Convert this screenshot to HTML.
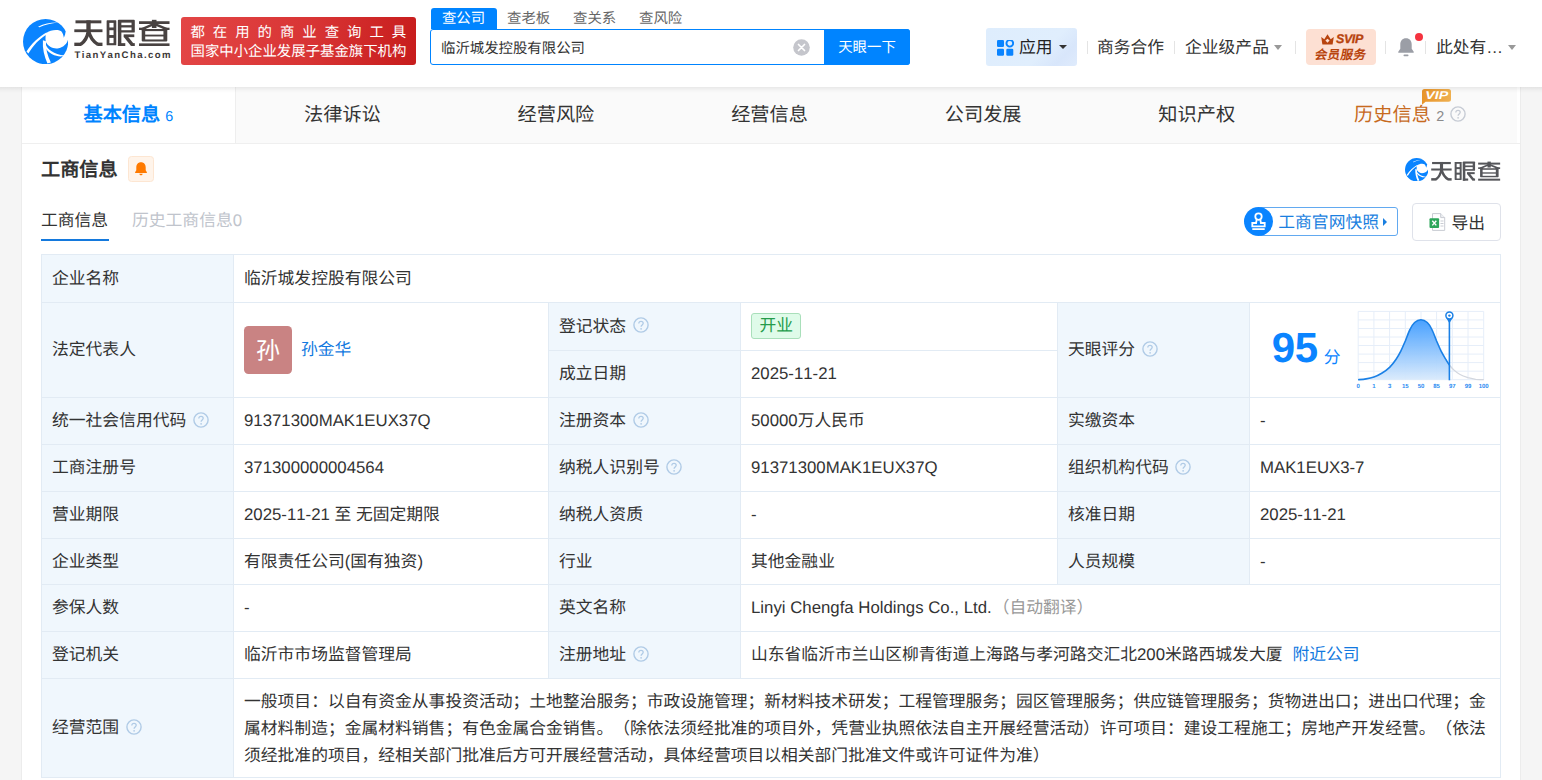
<!DOCTYPE html>
<html lang="zh-CN">
<head>
<meta charset="utf-8">
<title>临沂城发控股有限公司 - 天眼查</title>
<style>
*{box-sizing:border-box;margin:0;padding:0}
html,body{width:1542px;height:780px;overflow:hidden;background:#f5f5f5}
body{font-family:"Liberation Sans",sans-serif;color:#333;font-size:16.8px;position:relative;text-rendering:geometricPrecision;line-height:20px;text-spacing-trim:space-all;font-kerning:none}
.abs{position:absolute;white-space:nowrap}
/* header */
#hdr{position:absolute;left:0;top:0;width:1542px;height:87px;background:#fff}
#hsh{position:absolute;left:0;top:87px;width:1542px;height:6px;background:linear-gradient(rgba(0,0,0,.07),rgba(0,0,0,.02) 60%,rgba(0,0,0,0))}
#banner{left:181px;top:17px;width:235px;height:48px;border-radius:3px;background:linear-gradient(100deg,#e34646 0%,#d83434 55%,#c71c1c 100%);color:#fff;font-size:14.4px;line-height:19.5px;padding:6.6px 0 0 9.5px}
#banner .l1{letter-spacing:7.98px}
.stab{top:8px;height:21px;line-height:22.5px;font-size:14.4px;color:#666}
#stab1{left:430.5px;width:66px;background:#0084ff;color:#fff;text-align:center;border-radius:3px 3px 0 0}
#sbox{left:430px;top:29px;width:480px;height:36px;border:1px solid #0084ff;border-radius:3px;background:#fff}
#sbox .q{position:absolute;left:10px;top:1.5px;line-height:34px;font-size:14.4px;color:#333}
#sbtn{left:824px;top:29px;width:86px;height:36px;background:#0084ff;color:#fff;font-size:14.4px;line-height:38px;text-align:center;border-radius:0 3px 3px 0}
.nav{top:37px;line-height:22px;font-size:16.8px;color:#333}
.sep{position:absolute;top:40.5px;width:1px;height:13.5px;background:#e4e4e4}
.caret{display:inline-block;width:0;height:0;border-left:4px solid transparent;border-right:4px solid transparent;border-top:5px solid #999;vertical-align:middle;margin-left:5px;position:relative;top:-1px}
/* tabs */
#tabs{position:absolute;left:22px;top:87px;width:1498px;height:57px;background:#fff;border-bottom:1px solid #efefef}
.tab{position:absolute;top:0;height:56px;width:213.7px;background:#fafafa;text-align:center;line-height:58px;font-size:19.2px;color:#333;white-space:nowrap}
#panel{position:absolute;left:21px;top:87px;width:1500px;height:693px;background:#fff;border-left:1px solid #ececec;border-right:1px solid #ececec}

/* section */
#stitle{left:41px;top:158px;font-size:19.2px;font-weight:bold;line-height:26px;color:#333}
#sub1{left:41px;top:208.3px;font-size:16.8px;line-height:26px;color:#333}
#sub2{left:132px;top:208.3px;font-size:16.8px;line-height:26px;color:#c0c4cc}
#subline{position:absolute;left:41px;top:238.7px;width:68px;height:2.6px;background:#1479dd}
/* table */
#tb{position:absolute;left:0;top:0}
.cell{position:absolute;border-right:1px solid #e2ebf4;border-bottom:1px solid #e2ebf4;display:flex;align-items:center;padding-left:10px;white-space:nowrap;font-size:16.8px;line-height:20px;color:#333;background:#fff}
.lab{background:#f0f7fd}
.c1{left:41px;width:193px;border-left:1px solid #e2ebf4}
.c2{left:234px;width:315px}
.c3{left:549px;width:192px}
.c4{left:741px;width:317px}
.c5{left:1058px;width:192px}
.c6{left:1250px;width:251px}
.w26{left:234px;width:1267px}
.w46{left:741px;width:760px}
.r1{top:255px;height:48px}
.r2{top:303px;height:95px}
.r2a{top:303px;height:48px}
.r2b{top:351px;height:47px}
.r3{top:398px;height:47px}
.r4{top:445px;height:47px}
.r5{top:492px;height:47px}
.r6{top:539px;height:46px}
.r7{top:585px;height:47px}
.r8{top:632px;height:47px}
.r9{top:679px;height:99px}
.qm{margin-left:6.5px;flex:none;display:block;position:relative;top:-1.2px}
a,.lk{color:#1279e0;text-decoration:none}

#logoi{position:absolute;left:22.8px;top:18.5px;width:45.2px;height:45.2px}
#logow{position:absolute;left:74.4px;top:18.7px;width:95.9px;height:27.5px;color:#484241}
#logot{left:74.5px;top:50px;font-size:9.6px;font-weight:bold;line-height:11px;color:#3d3837;letter-spacing:1.4px}
#slogoi{position:absolute;left:1405px;top:157.6px;width:23.4px;height:23.4px}
#slogow{position:absolute;left:1431.3px;top:160.9px;width:69.5px;height:19.95px;color:#55565a}

.ava{display:inline-block;width:48px;height:48px;border-radius:4.5px;background:#c98383;color:#fff;font-size:24px;line-height:51px;text-align:center}
.tag{display:inline-block;height:26px;line-height:24px;padding:0 7.4px;border:1px solid #a9dfba;background:#dffbe9;color:#259b4b;border-radius:3px;font-size:16.8px;position:relative;top:-1px}
#bellbox{position:absolute;left:128px;top:156px;width:26px;height:26px;border:1px solid #fde6d2;background:#fff4ea;border-radius:3.5px}
#snap{position:absolute;left:1258px;top:207px;width:140px;height:29px;border:1px solid #62a9f0;border-radius:3px;background:#fff}
#snapc{position:absolute;left:1244px;top:207px;width:29px;height:29px;border-radius:50%;background:#0a84ff}
#snapt{left:1278.3px;top:213px;line-height:20px;font-size:16.8px;color:#1a7fe0}
#snapa{position:absolute;left:1383px;top:218.2px;width:0;height:0;border-top:4px solid transparent;border-bottom:4px solid transparent;border-left:4.5px solid #1a7fe0}
#exp{position:absolute;left:1412px;top:203px;width:89px;height:38px;border:1px solid #dfe2ea;border-radius:4px;background:#fff}
#expt{left:1451.5px;top:214px;line-height:20px;font-size:16.8px;color:#333}
#app{position:absolute;left:986px;top:28px;width:91px;height:38px;border-radius:3px;background:linear-gradient(135deg,#deedfd 0%,#e0eefd 62%,#d8e6fb 82%,#dfebfc 100%)}
#svip{position:absolute;left:1306px;top:29px;width:70px;height:36px;border-radius:4px;background:#fde0d3}

.qm2{display:inline-block;vertical-align:middle;margin-left:6px;position:relative;top:-1.5px}
#vip{position:absolute;left:1422px;top:89px;width:29px;height:16px}
#clr{position:absolute;left:792.5px;top:38.5px;width:17px;height:17px}
</style>
</head>
<body>
<svg width="0" height="0" style="position:absolute">
 <defs>
  <symbol id="tycicon" viewBox="44 40 704 704">
    <circle cx="396" cy="392" r="352" fill="#0a84ff"/>
    <path fill="#fff" d="M402 262 C470 212 580 195 640 232 C665 262 678 300 680 334 C695 300 705 270 708 240 L760 240 L760 352 L748 352 C735 420 680 480 600 495 C520 508 440 480 398 395 C392 350 394 300 402 262 Z"/>
    <path fill="#fff" d="M278 162 C380 112 480 92 592 96 C480 108 390 128 300 170 Z"/>
    <path fill="#fff" d="M98 545 C170 430 290 315 408 250 L426 276 C310 335 200 452 128 578 Z"/>
    <path fill="#fff" d="M354 370 C345 500 375 620 425 732 L478 716 C425 610 395 500 402 385 Z"/>
    <path fill="#fff" d="M394 425 C425 520 520 585 694 610 C630 640 465 622 386 482 Z"/>
  </symbol>
  <symbol id="tycword" viewBox="60 90 1290 370">
    <g fill="currentColor" stroke="none">
      <rect x="80" y="108" width="348" height="40"/>
      <rect x="64" y="229" width="379" height="38"/>
      <rect x="226" y="108" width="58" height="150"/>
      <rect x="64" y="408" width="95" height="46"/>
      <rect x="372" y="408" width="71" height="46"/>
      <rect x="499" y="108" width="130" height="335" rx="8"/>
      <rect x="651" y="108" width="46" height="347"/>
      <rect x="651" y="100" width="227" height="172" rx="12"/>
      <rect x="728" y="297" width="143" height="37"/>
      <rect x="828" y="415" width="50" height="40"/>
      <rect x="651" y="415" width="99" height="40"/>
      <rect x="1108" y="101" width="62" height="110"/>
      <rect x="935" y="120" width="411" height="37"/>
      <rect x="935" y="207" width="95" height="31"/>
      <rect x="1253" y="207" width="93" height="31"/>
      <rect x="971" y="226" width="344" height="167" rx="14"/>
      <rect x="935" y="418" width="411" height="37"/>
    </g>
    <g fill="#fff">
      <rect x="536" y="142" width="56" height="62"/>
      <rect x="536" y="241" width="56" height="65"/>
      <rect x="536" y="344" width="56" height="71"/>
      <rect x="697" y="139" width="137" height="34"/>
      <rect x="697" y="204" width="137" height="37"/>
      <rect x="1018" y="253" width="245" height="47"/>
      <rect x="1018" y="325" width="245" height="40"/>
    </g>
    <g fill="none" stroke="currentColor" stroke-width="46">
      <path d="M254 250 C240 330 205 395 150 431"/>
      <path d="M256 250 C275 330 320 395 380 431"/>
      <path d="M748 318 L845 438"/>
    </g>
    <g fill="none" stroke="currentColor" stroke-width="32">
      <path d="M1139 156 L975 226"/>
      <path d="M1139 156 L1310 226"/>
    </g>
  </symbol>
 </defs>
</svg>

<div id="panel"></div>
<div id="tabs">
  <div class="tab" style="left:0;background:#fff;color:#0084ff;font-weight:bold;border-right:1px solid #eee">基本信息<span style="font-size:14.4px;font-weight:normal;margin-left:5px">6</span></div>
  <div class="tab" style="left:213.6px">法律诉讼</div>
  <div class="tab" style="left:427.1px">经营风险</div>
  <div class="tab" style="left:640.7px">经营信息</div>
  <div class="tab" style="left:854.3px">公司发展</div>
  <div class="tab" style="left:1067.9px">知识产权</div>
  <div class="tab" style="left:1281.4px;color:#c76a1e">历史信息<span style="font-size:14.4px;color:#8a8a8a;margin-left:5.5px">2</span><svg class="qm2" width="16" height="16" viewBox="0 0 16 16"><circle cx="8" cy="8" r="7.1" fill="none" stroke="#c6cbd4" stroke-width="1.4"/><path d="M5.8 6.4c0-1.3.9-2.1 2.2-2.1s2.2.8 2.2 2c0 1.6-2.1 1.7-2.1 3.4" fill="none" stroke="#c6cbd4" stroke-width="1.3"/><circle cx="8.1" cy="11.8" r=".85" fill="#c6cbd4"/></svg></div>
</div>

<svg id="slogoi"><use href="#tycicon"/></svg>
<svg id="slogow"><use href="#tycword"/></svg>
<div class="abs" id="stitle">工商信息</div>
<div id="bellbox"><svg width="24" height="24" viewBox="0 0 24 24" style="position:absolute;left:0;top:0"><path fill="#ff7a00" d="M12 5.2c-3 0-4.7 2.2-4.7 5v3.1l-1.2 1.9c-.2.4 0 .8.5.8h10.8c.5 0 .7-.4.5-.8l-1.2-1.9v-3.1c0-2.8-1.7-5-4.7-5z"/><path fill="#ff7a00" d="M10.3 16.7h3.4c0 .9-.8 1.5-1.7 1.5s-1.7-.6-1.7-1.5z"/></svg></div>
<div id="snap"></div><div id="snapc"><svg width="29" height="29" viewBox="0 0 29 29" style="position:absolute;left:0;top:0"><g fill="none" stroke="#fff" stroke-width="1.8"><circle cx="14.5" cy="9.6" r="3.2"/><path d="M12.7 12.4 L12.1 16 H8.3 V19.3 H20.7 V16 H16.9 L16.3 12.4"/><path d="M8.3 22.1 H20.7"/></g></svg></div>
<div class="abs" id="snapt">工商官网快照</div><div id="snapa"></div>
<div id="exp"><svg width="18" height="19" viewBox="0 0 18 19" style="position:absolute;left:15.5px;top:9px"><path d="M3.5 .6h8.2l4 4v12.8H3.5z" fill="#fff" stroke="#c9ccd3" stroke-width="1"/><path d="M11.7 .6v4h4" fill="#eef0f3" stroke="#c9ccd3" stroke-width="1"/><path d="M11.5 8h3M11.5 10.5h3M11.5 13h3" stroke="#c9ccd3" stroke-width="1"/><rect x=".5" y="5.3" width="9.6" height="9.6" rx="1" fill="#2da65a"/><path d="M3.3 7.8l4 4.6M7.3 7.8l-4 4.6" stroke="#fff" stroke-width="1.4"/></svg></div>
<div class="abs" id="expt">导出</div>
<div class="abs" id="sub1">工商信息</div>
<div class="abs" id="sub2">历史工商信息0</div>
<div id="subline"></div>
<div id="tb">
  <div style="position:absolute;left:41px;top:254px;width:1460px;height:1px;background:#e2ebf4"></div>
  <div class="cell lab c1 r1">企业名称</div>
  <div class="cell w26 r1">临沂城发控股有限公司</div>

  <div class="cell lab c1 r2">法定代表人</div>
  <div class="cell c2 r2"><span class="ava">孙</span><span class="lk" style="margin-left:9px">孙金华</span></div>
  <div class="cell lab c3 r2a">登记状态<svg class="qm" width="16" height="16" viewBox="0 0 16 16"><circle cx="8" cy="8" r="7.1" fill="none" stroke="#b0cbe6" stroke-width="1.4"/><path d="M5.8 6.4c0-1.3.9-2.1 2.2-2.1s2.2.8 2.2 2c0 1.6-2.1 1.7-2.1 3.4" fill="none" stroke="#b0cbe6" stroke-width="1.3"/><circle cx="8.1" cy="11.8" r=".85" fill="#b0cbe6"/></svg></div>
  <div class="cell c4 r2a"><span class="tag">开业</span></div>
  <div class="cell lab c3 r2b">成立日期</div>
  <div class="cell c4 r2b">2025-11-21</div>
  <div class="cell lab c5 r2">天眼评分<svg class="qm" width="16" height="16" viewBox="0 0 16 16"><circle cx="8" cy="8" r="7.1" fill="none" stroke="#b0cbe6" stroke-width="1.4"/><path d="M5.8 6.4c0-1.3.9-2.1 2.2-2.1s2.2.8 2.2 2c0 1.6-2.1 1.7-2.1 3.4" fill="none" stroke="#b0cbe6" stroke-width="1.3"/><circle cx="8.1" cy="11.8" r=".85" fill="#b0cbe6"/></svg></div>
  <div class="cell c6 r2" id="score"></div>
  <div class="abs" style="left:1271.8px;top:322.6px;font-size:42px;font-weight:bold;line-height:50px;color:#0a84ff;letter-spacing:-.4px">95</div><div class="abs" style="left:1323.8px;top:347.8px;font-size:16.8px;line-height:20px;color:#0a84ff">分</div>
  <svg style="position:absolute;left:1350px;top:305px" width="150" height="90" viewBox="1350 305 150 90">
<defs><linearGradient id="bg1" x1="0" y1="0" x2="0" y2="1"><stop offset="0" stop-color="#3f9cff"/><stop offset="1" stop-color="#d9eafc"/></linearGradient></defs>
<path d="M1358.2 311.4 V379.7 M1373.9 311.4 V379.7 M1389.6 311.4 V379.7 M1405.3 311.4 V379.7 M1421.0 311.4 V379.7 M1436.6 311.4 V379.7 M1452.3 311.4 V379.7 M1468.0 311.4 V379.7 M1483.7 311.4 V379.7 M1358.2 311.4 H1483.7 M1358.2 319.9 H1483.7 M1358.2 328.5 H1483.7 M1358.2 337.0 H1483.7 M1358.2 345.5 H1483.7 M1358.2 354.1 H1483.7 M1358.2 362.6 H1483.7 M1358.2 371.2 H1483.7 M1358.2 379.7 H1483.7 " stroke="#e6eef9" stroke-width="1" fill="none"/>
<path d="M1358.1 379.7 C1359.4 379.6 1363.5 379.4 1366.1 378.9 C1368.8 378.5 1371.3 378.0 1373.9 377.1 C1376.5 376.2 1379.1 374.9 1381.7 373.3 C1384.3 371.7 1387.2 369.6 1389.6 367.3 C1392.0 364.9 1394.3 361.9 1396.1 359.2 C1398.0 356.5 1399.2 354.2 1400.8 351.1 C1402.3 348.1 1403.8 344.4 1405.4 340.8 C1406.9 337.1 1408.4 332.5 1410.0 329.5 C1411.5 326.4 1412.8 324.1 1414.6 322.5 C1416.4 320.9 1418.8 319.8 1420.9 319.8 C1423.1 319.8 1425.5 320.9 1427.3 322.5 C1429.1 324.1 1430.4 326.4 1431.9 329.5 C1433.4 332.5 1435.0 337.1 1436.5 340.8 C1438.1 344.4 1439.6 348.1 1441.1 351.1 C1442.7 354.2 1444.4 356.9 1445.7 359.2 C1447.1 361.5 1448.1 363.2 1449.4 365.0 L1449.4 379.7 L1358.1 379.7 Z" fill="url(#bg1)" opacity=".95"/>
<path d="M1449.4 365.0 C1450.8 366.8 1452.1 368.4 1453.8 369.9 C1455.5 371.5 1457.2 372.9 1459.6 374.2 C1461.9 375.5 1465.2 376.8 1467.9 377.7 C1470.6 378.5 1473.1 378.9 1475.7 379.3 C1478.4 379.6 1482.5 379.7 1483.8 379.7" fill="none" stroke="#d3d7df" stroke-width="1.3"/>
<path d="M1358.1 379.7 C1359.4 379.6 1363.5 379.4 1366.1 378.9 C1368.8 378.5 1371.3 378.0 1373.9 377.1 C1376.5 376.2 1379.1 374.9 1381.7 373.3 C1384.3 371.7 1387.2 369.6 1389.6 367.3 C1392.0 364.9 1394.3 361.9 1396.1 359.2 C1398.0 356.5 1399.2 354.2 1400.8 351.1 C1402.3 348.1 1403.8 344.4 1405.4 340.8 C1406.9 337.1 1408.4 332.5 1410.0 329.5 C1411.5 326.4 1412.8 324.1 1414.6 322.5 C1416.4 320.9 1418.8 319.8 1420.9 319.8 C1423.1 319.8 1425.5 320.9 1427.3 322.5 C1429.1 324.1 1430.4 326.4 1431.9 329.5 C1433.4 332.5 1435.0 337.1 1436.5 340.8 C1438.1 344.4 1439.6 348.1 1441.1 351.1 C1442.7 354.2 1444.4 356.9 1445.7 359.2 C1447.1 361.5 1448.1 363.2 1449.4 365.0" fill="none" stroke="#1a80e6" stroke-width="1.6"/>
<path d="M1449.4 321 V380.3" stroke="#1a80e6" stroke-width="1.6"/>
<path d="M1446.2 318 L1449.4 323.2 L1452.6 318 Z" fill="#1a80e6"/>
<circle cx="1449.4" cy="315.6" r="3.5" fill="#fff" stroke="#1a80e6" stroke-width="1.5"/>
<circle cx="1449.4" cy="315.6" r="1.2" fill="#1a80e6"/>
<g font-family="Liberation Sans, sans-serif" font-size="6" font-weight="bold" fill="#2b8cf2" text-anchor="middle"><text x="1358.2" y="387.9">0</text><text x="1373.9" y="387.9">1</text><text x="1389.6" y="387.9">3</text><text x="1405.3" y="387.9">15</text><text x="1421.0" y="387.9">50</text><text x="1436.6" y="387.9">85</text><text x="1452.3" y="387.9">97</text><text x="1468.0" y="387.9">99</text><text x="1483.7" y="387.9">100</text></g>
</svg>

  <div class="cell lab c1 r3">统一社会信用代码<svg class="qm" width="16" height="16" viewBox="0 0 16 16"><circle cx="8" cy="8" r="7.1" fill="none" stroke="#b0cbe6" stroke-width="1.4"/><path d="M5.8 6.4c0-1.3.9-2.1 2.2-2.1s2.2.8 2.2 2c0 1.6-2.1 1.7-2.1 3.4" fill="none" stroke="#b0cbe6" stroke-width="1.3"/><circle cx="8.1" cy="11.8" r=".85" fill="#b0cbe6"/></svg></div>
  <div class="cell c2 r3">91371300MAK1EUX37Q</div>
  <div class="cell lab c3 r3">注册资本<svg class="qm" width="16" height="16" viewBox="0 0 16 16"><circle cx="8" cy="8" r="7.1" fill="none" stroke="#b0cbe6" stroke-width="1.4"/><path d="M5.8 6.4c0-1.3.9-2.1 2.2-2.1s2.2.8 2.2 2c0 1.6-2.1 1.7-2.1 3.4" fill="none" stroke="#b0cbe6" stroke-width="1.3"/><circle cx="8.1" cy="11.8" r=".85" fill="#b0cbe6"/></svg></div>
  <div class="cell c4 r3">50000万人民币</div>
  <div class="cell lab c5 r3">实缴资本</div>
  <div class="cell c6 r3">-</div>

  <div class="cell lab c1 r4">工商注册号</div>
  <div class="cell c2 r4">371300000004564</div>
  <div class="cell lab c3 r4">纳税人识别号<svg class="qm" width="16" height="16" viewBox="0 0 16 16"><circle cx="8" cy="8" r="7.1" fill="none" stroke="#b0cbe6" stroke-width="1.4"/><path d="M5.8 6.4c0-1.3.9-2.1 2.2-2.1s2.2.8 2.2 2c0 1.6-2.1 1.7-2.1 3.4" fill="none" stroke="#b0cbe6" stroke-width="1.3"/><circle cx="8.1" cy="11.8" r=".85" fill="#b0cbe6"/></svg></div>
  <div class="cell c4 r4">91371300MAK1EUX37Q</div>
  <div class="cell lab c5 r4">组织机构代码<svg class="qm" width="16" height="16" viewBox="0 0 16 16"><circle cx="8" cy="8" r="7.1" fill="none" stroke="#b0cbe6" stroke-width="1.4"/><path d="M5.8 6.4c0-1.3.9-2.1 2.2-2.1s2.2.8 2.2 2c0 1.6-2.1 1.7-2.1 3.4" fill="none" stroke="#b0cbe6" stroke-width="1.3"/><circle cx="8.1" cy="11.8" r=".85" fill="#b0cbe6"/></svg></div>
  <div class="cell c6 r4">MAK1EUX3-7</div>

  <div class="cell lab c1 r5">营业期限</div>
  <div class="cell c2 r5">2025-11-21 至 无固定期限</div>
  <div class="cell lab c3 r5">纳税人资质</div>
  <div class="cell c4 r5">-</div>
  <div class="cell lab c5 r5">核准日期</div>
  <div class="cell c6 r5">2025-11-21</div>

  <div class="cell lab c1 r6">企业类型</div>
  <div class="cell c2 r6">有限责任公司(国有独资)</div>
  <div class="cell lab c3 r6">行业</div>
  <div class="cell c4 r6">其他金融业</div>
  <div class="cell lab c5 r6">人员规模</div>
  <div class="cell c6 r6">-</div>

  <div class="cell lab c1 r7">参保人数</div>
  <div class="cell c2 r7">-</div>
  <div class="cell lab c3 r7">英文名称</div>
  <div class="cell w46 r7">Linyi Chengfa Holdings Co., Ltd.<span style="color:#999;margin-left:1px">（自动翻译）</span></div>

  <div class="cell lab c1 r8">登记机关</div>
  <div class="cell c2 r8">临沂市市场监督管理局</div>
  <div class="cell lab c3 r8">注册地址<svg class="qm" width="16" height="16" viewBox="0 0 16 16"><circle cx="8" cy="8" r="7.1" fill="none" stroke="#b0cbe6" stroke-width="1.4"/><path d="M5.8 6.4c0-1.3.9-2.1 2.2-2.1s2.2.8 2.2 2c0 1.6-2.1 1.7-2.1 3.4" fill="none" stroke="#b0cbe6" stroke-width="1.3"/><circle cx="8.1" cy="11.8" r=".85" fill="#b0cbe6"/></svg></div>
  <div class="cell w46 r8">山东省临沂市兰山区柳青街道上海路与孝河路交汇北200米路西城发大厦<span class="lk" style="margin-left:10px">附近公司</span></div>

  <div class="cell lab c1 r9">经营范围<svg class="qm" width="16" height="16" viewBox="0 0 16 16"><circle cx="8" cy="8" r="7.1" fill="none" stroke="#b0cbe6" stroke-width="1.4"/><path d="M5.8 6.4c0-1.3.9-2.1 2.2-2.1s2.2.8 2.2 2c0 1.6-2.1 1.7-2.1 3.4" fill="none" stroke="#b0cbe6" stroke-width="1.3"/><circle cx="8.1" cy="11.8" r=".85" fill="#b0cbe6"/></svg></div>
  <div class="cell w26 r9"><div style="line-height:27px;position:relative;top:.5px">一般项目：以自有资金从事投资活动；土地整治服务；市政设施管理；新材料技术研发；工程管理服务；园区管理服务；供应链管理服务；货物进出口；进出口代理；金<br>属材料制造；金属材料销售；有色金属合金销售。（除依法须经批准的项目外，凭营业执照依法自主开展经营活动）许可项目：建设工程施工；房地产开发经营。（依法<br>须经批准的项目，经相关部门批准后方可开展经营活动，具体经营项目以相关部门批准文件或许可证件为准）</div></div>
</div>
<svg id="vip" viewBox="0 0 29 16"><defs><linearGradient id="vg" x1="0" y1="0" x2="1" y2="0"><stop offset="0" stop-color="#e8942a"/><stop offset="1" stop-color="#efb050"/></linearGradient></defs><path d="M2.5 0H26.5Q29 0 29 2.5V10.3Q29 12.8 26.5 12.8H3.6L0 15.8V2.5Q0 0 2.5 0Z" fill="url(#vg)"/><text x="14.8" y="10.4" font-family="Liberation Sans, sans-serif" font-size="11.4" font-weight="bold" font-style="italic" fill="#fff" text-anchor="middle" textLength="23" lengthAdjust="spacingAndGlyphs">VIP</text></svg>
<div id="hsh"></div>
<div id="hdr">
  <svg id="logoi"><use href="#tycicon"/></svg>
  <svg id="logow"><use href="#tycword"/></svg>
  <div class="abs" id="logot">TianYanCha.com</div>
  <div class="abs" id="banner"><div class="l1">都在用的商业查询工具</div><div>国家中小企业发展子基金旗下机构</div></div>
  <div class="abs stab" id="stab1">查公司</div>
  <div class="abs stab" style="left:507px">查老板</div>
  <div class="abs stab" style="left:573px">查关系</div>
  <div class="abs stab" style="left:639px">查风险</div>
  <div class="abs" id="sbox"><span class="q">临沂城发控股有限公司</span></div>
  <svg id="clr" viewBox="0 0 17 17"><circle cx="8.5" cy="8.5" r="8.3" fill="#c5c6cc"/><path d="M5.5 5.5L11.5 11.5M11.5 5.5L5.5 11.5" stroke="#fff" stroke-width="1.7" stroke-linecap="round"/></svg>
  <div class="abs" id="sbtn">天眼一下</div>
  <div id="app"></div>
  <svg class="abs" style="left:997px;top:39.5px" width="17" height="16" viewBox="0 0 17 16"><rect x="0" y="0" width="7" height="7" rx="1.3" fill="#0a84ff"/><rect x="0" y="8.7" width="7" height="7" rx="1.3" fill="#0a84ff"/><rect x="9.3" y="8.7" width="7" height="7" rx="1.3" fill="#0a84ff"/><circle cx="12.8" cy="3.3" r="3.35" fill="none" stroke="#0a84ff" stroke-width="1.9"/></svg>
  <div class="abs nav" style="left:1019px;color:#222">应用</div>
  <div class="abs" style="left:1058.5px;top:45px;width:0;height:0;border-left:4px solid transparent;border-right:4px solid transparent;border-top:4.5px solid #333"></div>
  <div class="sep" style="left:1087px"></div>
  <div class="sep" style="left:1174px"></div>
  <div class="sep" style="left:1295px"></div>
  <div class="sep" style="left:1385px"></div>
  <div class="sep" style="left:1425px"></div>
  <div id="svip"></div>
  <svg class="abs" style="left:1319.5px;top:34px" width="15" height="11" viewBox="0 0 15 11"><path fill="#b8440e" d="M1.2 3 L4.3 5.3 L7.5 .3 L10.7 5.3 L13.8 3 L12.6 10.6 H2.4 Z"/><path fill="#fde0d3" d="M7.5 4.8 L9.6 6.6 L7.5 8.8 L5.4 6.6 Z"/></svg>
  <div class="abs" style="left:1336px;top:33px;font-size:12.5px;font-weight:bold;font-style:italic;line-height:13px;color:#b8440e;letter-spacing:-.4px;-webkit-text-stroke:.3px #b8440e">SVIP</div>
  <div class="abs" style="left:1315px;top:48px;font-size:12.4px;font-weight:bold;line-height:14px;color:#b8440e;letter-spacing:.4px;transform:skewX(-10deg)">会员服务</div>
  <svg class="abs" style="left:1397px;top:37px" width="18" height="21" viewBox="0 0 18 21"><path fill="#9b9ea6" d="M9 1.2c-3.6 0-5.7 2.7-5.7 6.2v4.4l-2 2.9c-.3.5 0 1 .6 1h14.2c.6 0 .9-.5.6-1l-2-2.9V7.4c0-3.5-2.1-6.2-5.7-6.2z"/><rect x="6.5" y="17.6" width="5" height="1.6" rx=".8" fill="#9b9ea6"/></svg>
  <div class="abs" style="left:1414.8px;top:32.6px;width:8.2px;height:8.2px;border-radius:50%;background:#f5333f"></div>
  <div class="abs nav" style="left:1097px">商务合作</div>
  <div class="abs nav" style="left:1185px">企业级产品<span class="caret"></span></div>
  <div class="abs nav" style="left:1436px">此处有…<span class="caret"></span></div>
</div>
</body>
</html>
